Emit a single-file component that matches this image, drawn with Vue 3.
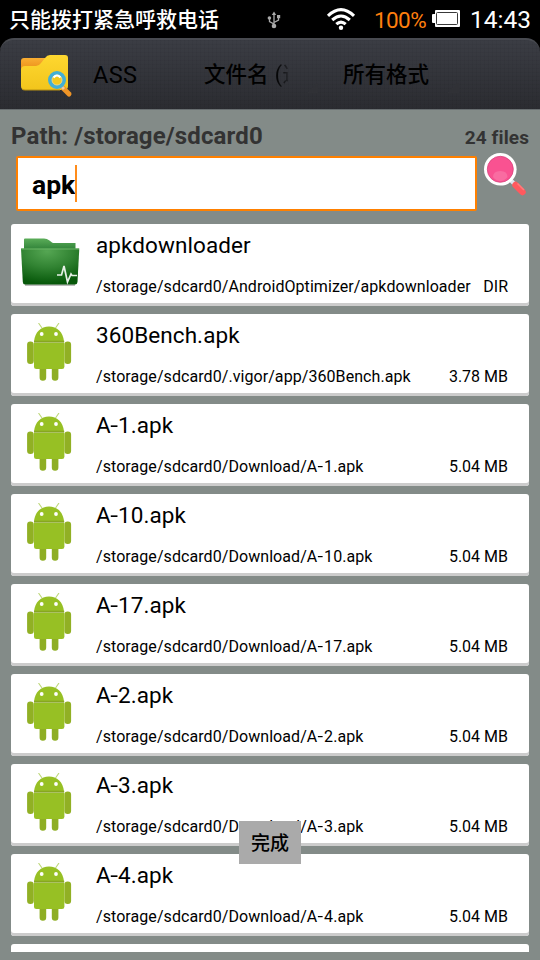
<script setup>
const files = [
  { name: 'apkdownloader', path: '/storage/sdcard0/AndroidOptimizer/apkdownloader', size: 'DIR', dir: true },
  { name: '360Bench.apk', path: '/storage/sdcard0/.vigor/app/360Bench.apk', size: '3.78 MB' },
  ...['A-1', 'A-10', 'A-17', 'A-2', 'A-3', 'A-4'].map((n) => ({
    name: `${n}.apk`,
    path: `/storage/sdcard0/Download/${n}.apk`,
    size: '5.04 MB',
  })),
  { name: '', path: '', size: '', blank: true },
]
// Hyphens are drawn wider than the font's own, so they get their own span.
const parts = (text) => text.split(/(-)/)
</script>

<template>
  <div class="screen">
    <header class="status">
      <span class="carrier">只能拨打紧急呼救电话</span>
      <svg class="usb" width="14" height="18" viewBox="0 0 14 18" fill="none" stroke="#aaa" stroke-width="1.3">
        <path d="M7 3V14M7 13L2.5 10.5V7M7 11.5L11.5 9V5" />
        <path d="M4.8 4L7 .5L9.2 4Z" fill="#aaa" stroke="none" />
        <circle cx="7" cy="15" r="2.3" fill="#aaa" stroke="none" />
        <circle cx="2.4" cy="7" r="1.8" fill="#aaa" stroke="none" />
        <rect x="10" y="4" width="3.2" height="3.2" fill="#aaa" stroke="none" />
      </svg>
      <svg class="wifi" width="30" height="24" viewBox="0 0 30 24" fill="none" stroke="#fff" stroke-width="3.1">
        <path d="M2 8.8Q15-3.5 28 8.8M6.2 13Q15 5 23.8 13M10.3 17.2Q15 13 19.7 17.2" />
        <circle cx="15" cy="20.8" r="2.2" fill="#fff" stroke="none" />
      </svg>
      <span class="percent">100%</span>
      <svg class="battery" width="29" height="18" viewBox="0 0 29 18">
        <path d="M3 1Q3 0 4 0H27Q28 0 28 1V16Q28 17 27 17H4Q3 17 3 16V13H1Q0 13 0 12V5Q0 4 1 4H3Z" fill="#fff" />
        <rect x="4.5" y="2.5" width="21" height="12" rx="1" fill="#fff" stroke="#222" stroke-width=".9" />
      </svg>
      <span class="clock">14:43</span>
    </header>

    <div class="bar-wrap">
      <nav class="bar">
        <svg class="logo" width="54" height="44" viewBox="0 0 54 44">
          <defs>
            <linearGradient id="gold" x2="0" y2="1"><stop stop-color="#fed730" /><stop offset="1" stop-color="#f2c51c" /></linearGradient>
            <linearGradient id="orange" x2="0" y2="1"><stop stop-color="#f9ae32" /><stop offset="1" stop-color="#e88b17" /></linearGradient>
          </defs>
          <path d="M1 6Q1 3 4 3H31V16H1Z" fill="url(#orange)" />
          <path d="M1 15Q1 11 5 11H16Q19 11 21 8L25 3Q27 0 30 0H45Q48 0 48 3V31Q48 35 44 35H5Q1 35 1 31Z" fill="url(#gold)" />
          <path d="M2 34Q3 35 5 35H40" fill="none" stroke="#b99110" stroke-width="1" />
          <path d="M43 33L49 39" stroke="#ef9427" stroke-width="5" stroke-linecap="round" />
          <path d="M42 32L44 34" stroke="#e9c8a1" stroke-width="3" />
          <circle cx="37" cy="25" r="7" fill="#f6ce24" stroke="#43afd5" stroke-width="4" />
          <circle cx="37" cy="25" r="5" fill="#f3c91e" stroke="#e6d58a" stroke-width="1" />
          <path d="M33.5 22.5Q37 18.5 40.5 22.5" fill="none" stroke="#fff" stroke-width="2" />
        </svg>
        <span class="app">ASS</span>
        <span class="sort">文件名<span class="cut"> (递增)</span></span>
        <i class="corner first"></i>
        <span class="format">所有格式</span>
        <i class="corner"></i>
      </nav>
    </div>

    <section class="summary">
      <strong class="location">Path: /storage/sdcard0</strong>
      <strong class="count">24 files</strong>
    </section>

    <section class="search">
      <div class="field"><span class="query">apk</span><i class="caret"></i></div>
      <svg class="lens" width="43" height="43" viewBox="0 0 43 43">
        <path d="M26.5 27L30 30.5" stroke="#dde6ef" stroke-width="4" />
        <path d="M31.5 32L38.5 39" stroke="#ff595e" stroke-width="6.5" stroke-linecap="round" />
        <path d="M33.5 30.5L40 37" stroke="#ff7c7b" stroke-width="1.5" />
        <circle cx="16.3" cy="16.3" r="16.3" fill="#fff" />
        <circle cx="16.3" cy="16.3" r="13" fill="#f95291" stroke="#d8447d" stroke-width=".8" />
        <path d="M9 24Q9 18 16.3 18Q23.5 18 23.5 24Q20.5 28 16.3 28Q12 28 9 24Z" fill="#f96ca1" />
      </svg>
    </section>

    <main class="list">
      <article v-for="(f, i) in files" :key="i" class="card">
        <template v-if="!f.blank">
          <svg v-if="f.dir" class="icon folder" width="60" height="60" viewBox="0 0 60 60">
            <defs>
              <radialGradient id="green" cx=".45" cy=".08" r=".9"><stop stop-color="#55a653" /><stop offset=".5" stop-color="#318332" /><stop offset="1" stop-color="#07580a" /></radialGradient>
              <linearGradient id="back" x2="0" y2="1"><stop stop-color="#5bad59" /><stop offset="1" stop-color="#32843a" /></linearGradient>
            </defs>
            <path d="M4 48H54" stroke="#bbb" stroke-width="2" />
            <path d="M3 12V2.5Q3 1.5 4 1.5H23Q26 1.5 28.5 3.5L31 5.5Q32 6 33 6H54.5V12Z" fill="url(#back)" />
            <path d="M0 11.5H58.3L56.5 45Q56.3 47.5 54 47.5H4Q2 47.5 1.8 45Z" fill="url(#green)" />
            <path d="M.4 12H58" stroke="#6ab567" stroke-width="1" />
            <path d="M36 38H40.5L43 29L46.5 45L50 37L51 38.5H56" fill="none" stroke="#e6f0e6" stroke-width="1.7" />
          </svg>
          <svg v-else class="icon" width="60" height="60" viewBox="0 0 60 60">
            <path d="M21 5L17.5 0M34.5 5L38 0" stroke="#bdd779" stroke-width="1.1" />
            <path d="M18.6 44H25.2V54.5Q25.2 57.8 21.9 57.8Q18.6 57.8 18.6 54.5ZM30.8 44H37.4V54.5Q37.4 57.8 34.1 57.8Q30.8 57.8 30.8 54.5Z" fill="#8fae25" />
            <rect x="6.1" y="18.6" width="6.7" height="22.4" rx="3.2" fill="#91b024" />
            <rect x="43.4" y="18.6" width="6.7" height="22.4" rx="3.2" fill="#91b024" />
            <path d="M13 18.5C13.8 9 20 3.5 28 3.5S42.2 9 43 18.5Z" fill="#97c024" />
            <path d="M13 20H43.4V43.5Q43.4 46 41 46H15.5Q13 46 13 43.5Z" fill="#97c024" />
            <path d="M13 18.7H43.2" stroke="#87a622" stroke-width="2" />
            <circle cx="20.7" cy="11" r="1.9" fill="#fff" /><circle cx="35" cy="11" r="1.9" fill="#fff" />
          </svg>
          <div class="info">
            <div class="name"><span v-for="(p, k) in parts(f.name)" :key="k" :class="{ dash: p === '-' }">{{ p }}</span></div>
            <div class="meta">
              <span class="path"><span v-for="(p, k) in parts(f.path)" :key="k" :class="{ dash: p === '-' }">{{ p }}</span></span>
              <span class="size">{{ f.size }}</span>
            </div>
          </div>
        </template>
      </article>
    </main>
    <div class="toast">完成</div>
  </div>
</template>

<style>
body { margin: 0; background: #838b88; }
</style>

<style scoped>
.screen { position: relative; width: 540px; height: 960px; overflow: hidden; background: #838b88; color: #000; font-family: Roboto, "Noto Sans CJK SC", sans-serif; display: flex; flex-direction: column; }
.status { height: 38px; flex: none; background: #000; color: #fff; display: flex; align-items: center; box-sizing: border-box; padding-left: 9px; white-space: nowrap; }
.carrier { font-size: 21px; width: 258px; line-height: 38px; font-weight: 500; padding-top: 1px; }
.usb { margin-top: 2px; width: 14px; flex: none; }
.wifi { margin-left: 45px; flex: none; }
.percent { color: #ff7f0e; font-size: 22.5px; margin-left: 18px; width: 58px; line-height: 38px; padding-top: 1px; letter-spacing: -0.6px; }
.battery { flex: none; margin-bottom: 1px; }
.clock { font-size: 24.5px; margin-left: 9px; line-height: 38px; padding-top: 2px; }
.bar-wrap { background: #000; height: 72px; flex: none; }
.bar { height: 72px; box-sizing: border-box; border-radius: 14px 14px 0 0; border-top: 2px solid #484a50; border-bottom: 1px solid #686e70; background: repeating-linear-gradient(90deg, rgba(0,0,0,.035) 0 1px, transparent 1px 4px), repeating-linear-gradient(0deg, rgba(0,0,0,.035) 0 1px, transparent 1px 4px), linear-gradient(#3b3d44, #2b2c31); display: flex; align-items: center; padding-left: 20px; white-space: nowrap; }
.logo { flex: none; margin-top: 4px; }
.app { font-size: 23.5px; margin-left: 19px; width: 111px; flex: none; letter-spacing: .3px; }
.sort, .format { font-size: 21.5px; font-weight: 500; line-height: 32px; flex: none; margin-top: 1px; }
.sort { width: 84px; overflow: hidden; }
.cut { font-weight: 400; margin-left: 1px; -webkit-mask-image: linear-gradient(90deg, #000 5px, transparent 24px); mask-image: linear-gradient(90deg, #000 5px, transparent 24px); }
.format { width: 86px; }
.corner { width: 11px; height: 11px; flex: none; margin: 26px 0 0 19px; background: linear-gradient(135deg, transparent 50%, #303136 50%); }
.corner.first { margin: 26px 25px 0 19px; }
.summary { height: 46px; flex: none; box-sizing: border-box; padding: 0 11px; display: flex; justify-content: space-between; align-items: baseline; color: #333; white-space: nowrap; line-height: 52px; }
.location { font-size: 24px; letter-spacing: .13px; }
.count { font-size: 19px; letter-spacing: .1px; }
.search { display: flex; height: 68px; flex: none; padding-left: 16px; }
.field { box-sizing: border-box; width: 461px; height: 55px; border: 2px solid #ff8000; border-radius: 2px; background: #fff; display: flex; align-items: center; padding-left: 14px; }
.query { font-size: 26.5px; font-weight: 700; line-height: 40px; padding-top: 3px; }
.caret { width: 2px; height: 37px; margin-left: -.5px; background: #ff8c1a; }
.lens { margin: -3px 0 0 7px; flex: none; }
.list { flex: none; height: 728px; overflow: hidden; padding: 0 11px; display: flex; flex-direction: column; gap: 8px; }
.card { flex: none; height: 82px; box-sizing: border-box; background: #fff; border-radius: 3px; box-shadow: inset 0 -3px #ccc; display: flex; padding: 9px 21px 0 10px; }
.icon { flex: none; }
.folder { margin-top: 4px; }
.info { margin-left: 15px; flex: 1; white-space: nowrap; }
.name { font-size: 22.5px; line-height: 24px; letter-spacing: .08px; }
.meta { display: flex; justify-content: space-between; font-size: 16px; line-height: 20px; margin-top: 20px; }
.path { letter-spacing: .07px; }
.dash { display: inline-block; transform: scaleX(1.25); margin: 0 .07em; }
.name .dash { margin: 0 .02em; }
.toast { position: absolute; left: 239px; top: 821px; width: 62px; height: 43px; box-sizing: border-box; padding-top: 2px; background: #aaa; font-size: 19px; line-height: 41px; text-align: center; font-weight: 500; }
</style>
